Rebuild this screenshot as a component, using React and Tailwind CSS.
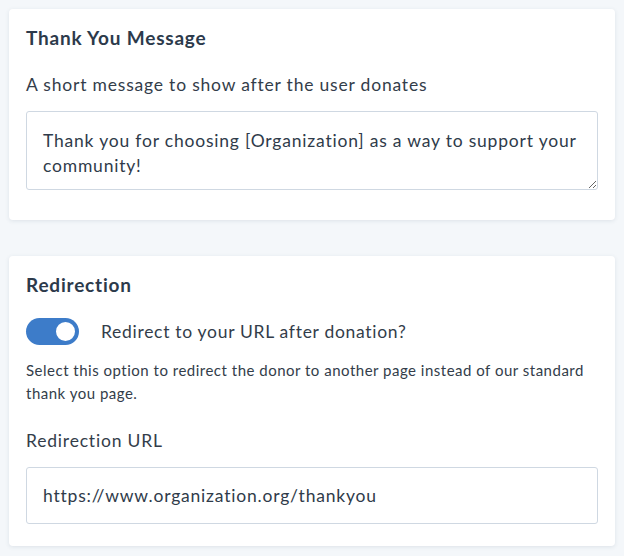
import { useState } from 'react';

const App = () => {
  const [redirect, setRedirect] = useState(true);

  return (
    <div
      className="min-h-[556px] bg-[#f4f7fa] px-[9px] pt-[9px] pb-3 text-[#2f3b4a]"
      style={{ fontFamily: 'Lato, "Noto Sans", sans-serif' }}
    >
      <div className="bg-white rounded-[4px] shadow-[0_1px_4px_rgba(60,80,110,0.12)] px-[17px] pt-[17px] pb-[30px]">
        <h2 className="text-[19px] font-bold text-[#2c3a4b] leading-[24px] tracking-[0.8px]">Thank You Message</h2>
        <p className="mt-[23px] text-[17.5px] leading-[24px] text-[#333d4a] tracking-[0.8px]">
          A short message to show after the user donates
        </p>
        <textarea
          className="mt-[14px] block w-full h-[79px] border border-[#cfd8e2] rounded-[3px] px-4 pt-[16px] text-[17.5px] leading-[25px] tracking-[0.8px] text-[#2f3b4a] outline-none resize-y"
          defaultValue="Thank you for choosing [Organization] as a way to support your community!"
        />
      </div>

      <div className="mt-[36px] bg-white rounded-[4px] shadow-[0_1px_4px_rgba(60,80,110,0.12)] px-[17px] pt-[17px] pb-[22px]">
        <h2 className="text-[19px] font-bold text-[#2c3a4b] leading-[24px] tracking-[0.8px]">Redirection</h2>
        <div className="mt-[21px] flex items-center gap-[22px]">
          <button
            onClick={() => setRedirect(!redirect)}
            className={`relative w-[53px] h-[27px] rounded-full ${redirect ? 'bg-[#3d7cc9]' : 'bg-[#cfd8e2]'}`}
          >
            <span
              className={`absolute top-[2px] w-[23px] h-[23px] rounded-full bg-white border-2 ${redirect ? 'left-[28px] border-[#3d7cc9]' : 'left-[2px] border-[#cfd8e2]'}`}
            />
          </button>
          <span className="text-[17.5px] leading-[24px] text-[#333d4a] tracking-[0.7px]">Redirect to your URL after donation?</span>
        </div>
        <p className="mt-[14px] text-[15px] leading-[23px] text-[#333d4a] tracking-[0.5px]">
          Select this option to redirect the donor to another page instead of our standard thank you page.
        </p>
        <p className="mt-[24px] text-[17.5px] leading-[24px] text-[#333d4a] tracking-[0.8px]">Redirection URL</p>
        <input
          className="mt-[14px] block w-full h-[57px] border border-[#cfd8e2] rounded-[3px] px-4 text-[17.5px] tracking-[0.8px] text-[#2f3b4a] outline-none"
          defaultValue="https://www.organization.org/thankyou"
        />
      </div>
    </div>
  );
};

export default App;
